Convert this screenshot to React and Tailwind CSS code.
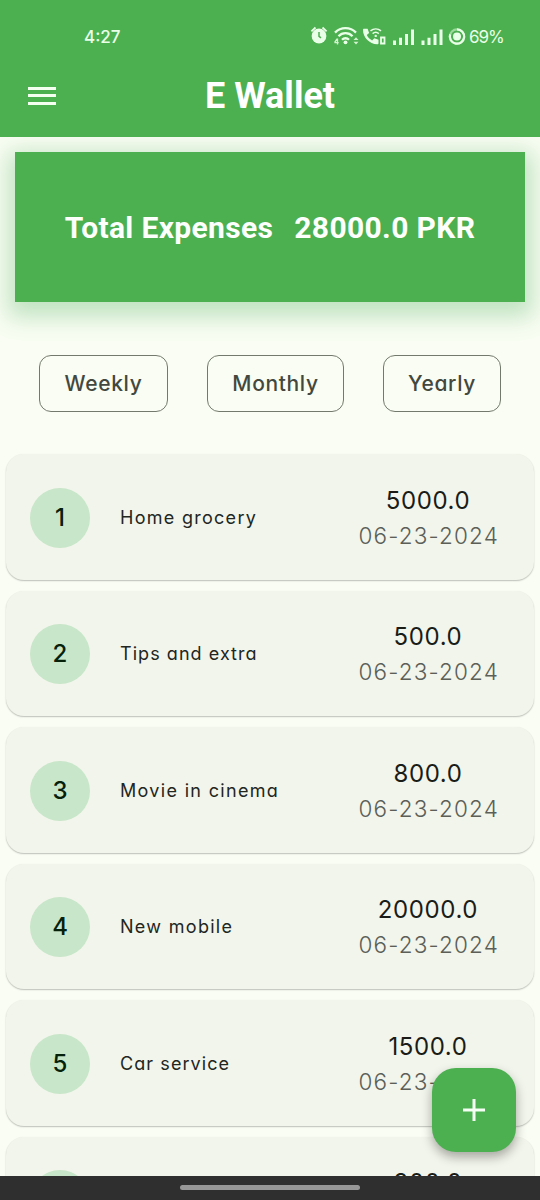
import React from "react";

const expenses = [
  { title: "Home grocery", amount: "5000.0", track: "tracking-[1.28px]" },
  { title: "Tips and extra", amount: "500.0", track: "tracking-[1.05px]" },
  { title: "Movie in cinema", amount: "800.0", track: "tracking-[1.32px]" },
  { title: "New mobile", amount: "20000.0", track: "tracking-[1.3px]" },
  { title: "Car service", amount: "1500.0", track: "tracking-[1.08px]" },
  { title: "Lunch", amount: "300.0", track: "tracking-[1.2px]" },
];

const periods = [
  { label: "Weekly", width: "w-[129px]" },
  { label: "Monthly", width: "w-[137px]" },
  { label: "Yearly", width: "w-[118px]" },
];

function StatusIcons() {
  return (
    <svg width="157" height="24" viewBox="0 0 157 24" fill="none" className="mb-[3px] shrink-0">
      <circle cx="9" cy="14" r="7.4" fill="#eaffe8" />
      <path d="M1.4 9.4 5.5 5.5M16.600 9.400 12.500 5.500" stroke="#eaffe8" strokeWidth="1.8" />
      <path d="M9 10v4.300l2 1.600" stroke="#4caf50" strokeWidth="1.5" />
      <g stroke="#eaffe8" strokeWidth="2.3" fill="none">
        <path d="M25 10.600a14.600 14.600 0 0 1 21 0" />
        <path d="M28.500 14.200a9.600 9.600 0 0 1 14 0" />
        <path d="M32 17.700a4.900 4.900 0 0 1 7 0" />
      </g>
      <circle cx="35.5" cy="20.3" r="1.9" fill="#eaffe8" />
      <path d="M27.500 16.500v6M24.500 20.700h4.200M27 16.800l-2.500 3.800" stroke="#d3f3cf" strokeWidth="1.3" />
      <path d="m43.500 18 2.500-2.700 2.500 2.700zM43.500 19.700h5L46 22.400z" fill="#d3f3cf" />
      <path d="M54 6.700h3.600l1.500 4.300-2.300 2.100c1.200 2.500 2.900 4.200 5.300 5.300l2.200-2.200 4.200 1.500v3.600c0 .6-.6 1-1.200 1C59.300 22 53 15.500 53 8c0-.8.4-1.300 1-1.300Z" fill="#eaffe8" />
      <path d="M60.500 8.800a8.300 8.300 0 0 1 10.500 0M62.600 11.600a4.700 4.700 0 0 1 6.200 0" stroke="#eaffe8" strokeWidth="1.5" />
      <circle cx="65.7" cy="13.9" r="1.2" fill="#eaffe8" />
      <path d="M71 15.500h3.500v6H71z" stroke="#eaffe8" strokeWidth="1.8" />
      <path d="M83 18.500h3V23h-3zM89 15.800h3V23h-3zM95 12h3v11h-3zM101 7.500h3V23h-3zM111.500 18.500h3V23h-3zM117.500 15.800h3V23h-3zM123.500 12h3v11h-3zM129.500 7.500h3V23h-3z" fill="#eaffe8" />
      <circle cx="147" cy="14.5" r="7.2" stroke="#9ad99a" strokeWidth="2.2" />
      <path d="M147 7.300a7.200 7.200 0 1 1-6.900 5.100" stroke="#eaffe8" strokeWidth="2.2" />
      <circle cx="147" cy="14.5" r="4" fill="#eaffe8" />
    </svg>
  );
}

function Header() {
  return (
    <header className="h-[137px] shrink-0 bg-[#4caf50] text-white">
      <div className="flex h-[60px] items-end justify-between pr-[37px] pb-[11px] pl-[84px] text-[#eaffe8]">
        <span className="text-[17px] leading-6 font-medium">4:27</span>
        <div className="flex items-end gap-[2px]">
          <StatusIcons />
          <span className="w-[34px] text-[17px] leading-6 tracking-[-1.1px]">69%</span>
        </div>
      </div>
      <div className="grid h-[71px] grid-cols-[84px_1fr_84px] items-center">
        <button aria-label="Menu" className="flex flex-col gap-[4.5px] pl-7">
          <span className="h-[3px] w-[28px] bg-[#f4fff2]" />
          <span className="h-[3px] w-[28px] bg-[#f4fff2]" />
          <span className="h-[3px] w-[28px] bg-[#f4fff2]" />
        </button>
        <h1 className="text-center font-['Roboto',sans-serif] text-[36px] leading-[44px] font-bold">E Wallet</h1>
      </div>
    </header>
  );
}

function ExpenseCard({ index, item }) {
  return (
    <li className="flex h-[125.5px] shrink-0 items-center rounded-[18px] bg-[#f2f5eb] pt-[1.5px] pr-[35px] pl-6 shadow-[0_1px_1.5px_rgba(0,0,0,0.24),0_0_1.5px_rgba(0,0,0,0.03)]">
      <span className="flex size-[60px] items-center justify-center rounded-full bg-[#c8e6c9] text-[24px] font-medium text-[#06210a]">
        {index}
      </span>
      <span className={`ml-[30px] grow text-[18px] leading-7 whitespace-nowrap text-[#22261f] ${item.track}`}>{item.title}</span>
      <span className="flex flex-col items-center whitespace-nowrap">
        <span className="pr-[1.5px] text-[24px] leading-[35px] tracking-[0.6px] text-[#1a1c18]">{item.amount}</span>
        <span className="text-[22.5px] leading-[35px] font-[350] tracking-[1.15px] text-[#5c5f58]">06-23-2024</span>
      </span>
    </li>
  );
}

export default function App() {
  return (
    <div className="relative flex h-[1200px] w-[540px] flex-col overflow-hidden bg-[#f9fdf3] font-['Inter',sans-serif] [font-feature-settings:'cv11']">
      <Header />
      <main className="flex min-h-0 grow flex-col overflow-hidden">
        <section className="mx-[15px] mt-[15.4px] flex h-[150px] shrink-0 items-center justify-center gap-[21px] bg-[#4caf50] font-['Roboto',sans-serif] text-[30px] font-bold tracking-[0.35px] whitespace-pre text-[#fcfffb] shadow-[0_7.5px_22px_7.5px_#c0e3c1]">
          <span>Total Expenses</span>
          <span>28000.0 PKR</span>
        </section>
        <nav className="mt-[52.6px] flex h-[57px] shrink-0 justify-between px-[39px]">
          {periods.map((p) => (
            <button key={p.label} className={`${p.width} rounded-[12px] border-[1.5px] border-[#74796d] text-[21px] font-medium tracking-[0.65px] text-[#43483e]`}>
              {p.label}
            </button>
          ))}
        </nav>
        <ul className="mt-[42.5px] flex flex-col gap-[11px] px-[6px]">
          {expenses.map((item, i) => (
            <ExpenseCard key={item.title} index={i + 1} item={item} />
          ))}
        </ul>
      </main>
      <footer className="flex h-6 shrink-0 items-start justify-center bg-[#2f2f2f] pt-[9px]">
        <span className="h-[5px] w-[180px] rounded-full bg-[#979797]" />
      </footer>
      <button aria-label="Add expense" className="absolute top-[1068px] left-[432px] flex size-[84px] items-center justify-center rounded-[24px] bg-[#4caf50] shadow-[0_5px_11px_rgba(0,0,0,0.32)]">
        <svg width="22" height="22" viewBox="0 0 22 22" stroke="#f6fff4" strokeWidth="3">
          <path d="M11 0v22M0 11h22" />
        </svg>
      </button>
    </div>
  );
}
